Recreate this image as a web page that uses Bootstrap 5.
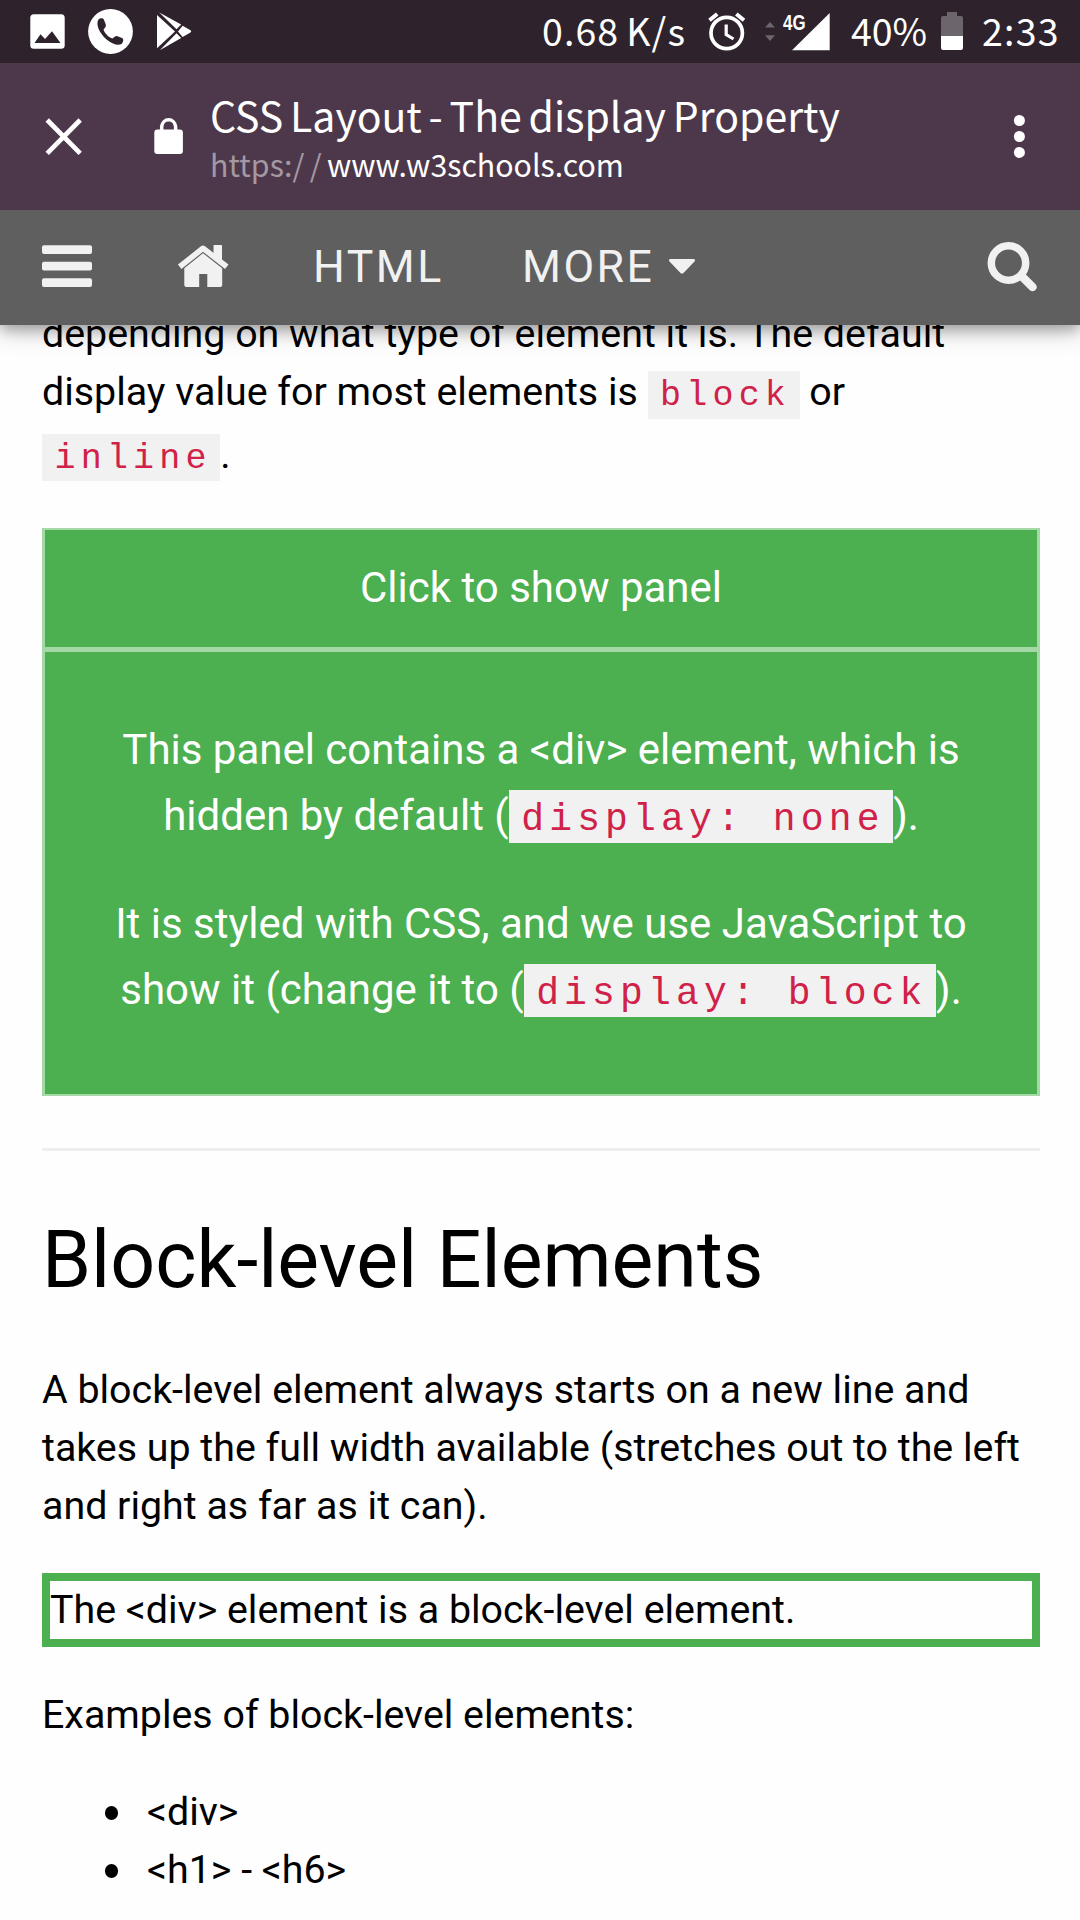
<!DOCTYPE html>
<html lang="en">
<head>
<meta charset="utf-8">
<title>CSS Layout - The display Property</title>
<link href="https://cdn.jsdelivr.net/npm/bootstrap@5.3.0/dist/css/bootstrap.min.css" rel="stylesheet">
<style>
body{font-family:Roboto,"Liberation Sans",sans-serif;font-size:39.37px;line-height:58px;color:#000;background:#fefefe;height:1920px;overflow:hidden}
svg{display:block;flex:none}
.status-bar{height:63px;background:#2e232d;padding:0 19px 0 30px;font:37.5px/59px "Noto Sans CJK SC",sans-serif}
.status-bar .gap-a{margin-left:23px}
.status-bar .gap-b{margin-left:24px}
.speed{width:167px;letter-spacing:1.1px;word-spacing:-2.5px;padding-left:1px}
.pct{width:91px;margin-left:19px;padding-left:1px}
.clock{width:79px;margin-left:19px;letter-spacing:1.2px}
.net-label{font:bold 22px "Liberation Sans",sans-serif}
.app-bar{height:147px;background:#4d384b;font-family:"Noto Sans CJK SC",sans-serif;z-index:3}
.page-info{padding-top:26px;margin-left:25px}
.page-title{font-size:41px;word-spacing:-2.4px;line-height:50px;white-space:nowrap}
.page-url{font-size:30.3px;line-height:51px;white-space:nowrap}
.scheme{color:#a498a3;letter-spacing:.1px}
.slashes{letter-spacing:5.3px}
.site-nav{height:115px;background:#5f5f5f;color:#f1f1f1;font-size:44.6px;letter-spacing:2.5px;line-height:114px;z-index:2;box-shadow:0 5px 13px rgba(0,0,0,.28),0 5px 26px rgba(0,0,0,.2)}
.nav-html{width:209px}
.nav-more{width:134px}
.page-body{padding:0 40px 0 42px}
.intro{margin:-20px 0 44.5px;white-space:nowrap}
.intro-last{margin-top:4.6px}
.kw{font-family:"Liberation Mono",monospace;font-size:35px;letter-spacing:5.2px;color:#d02148;background:#f1f1f1;padding:5px 8.5px 2.5px 12.5px;line-height:1}
.demo-panel{border:2px solid #a4d8a6;border-width:2px 3px;background:#4caf50;color:#fff;font-size:42px;text-align:center;white-space:nowrap}
.demo-head{line-height:115px;padding-bottom:2px;border-bottom:5px solid #a4d8a6}
.demo-text{height:442px;padding-top:65.4px;line-height:66px}
.demo-text p{margin:0 0 41.6px}
.demo-text .kw{font-size:38px;letter-spacing:5.15px;padding:8px 8.5px 2px 12.5px}
.rule-line{height:3px;background:#eee;margin:52px 0 58.7px}
.section-title{font-size:78.8px;line-height:100px;font-weight:400;margin:0 0 51px}
.section-text{margin:0 0 37.8px;white-space:nowrap}
.div-demo{border:8px solid #4caf50;height:74px;line-height:58px}
.examples{margin:39px 0}
.example-list{padding-left:105px;margin:0;list-style:none}
.example-list li{display:flex;align-items:center}
.example-list li::before{content:"";width:13.4px;height:13.4px;border-radius:50%;background:#000;margin:3px 29px 0 -42.4px}
</style>
</head>
<body>
<div class="status-bar d-flex align-items-start text-white">
  <svg width="35" height="63" viewBox="30 0 35 63"><rect x="30.3" y="14.3" width="34.4" height="34.4" rx="3.5" fill="#fff"/><path d="M34.5 43L40.5 34.3 45 39 52 31.3 60.5 43Z" fill="#2e232d"/></svg>
  <svg class="gap-a" width="45" height="63" viewBox="88 0 45 63"><circle cx="110.5" cy="31.5" r="22.4" fill="#fff"/><path d="M98.5 19.5C100 18 103.5 17.5 104 20L105.8 24.5C106.3 27 104.5 28 103.5 29.5 105 34 109 37.5 112.5 38.5 114.5 37 115.5 35.8 117.5 36.2L122 38C124 39 123.5 42 121.5 44 118.5 45.8 112 44.5 106 39 99 32.5 95.5 24 98.5 19.5Z" fill="#2e232d"/></svg>
  <svg class="gap-b" width="35" height="63" viewBox="157 0 35 63" fill="#fff"><path d="M157 15L175 31.4 157 48.3ZM159.3 12.5L181.2 24.5 176.5 29.2ZM182.6 25.7L190.5 30.2Q192 31.3 190.5 32.5L182.6 37 178 31.4ZM176.5 33.3L181.2 38 159.8 50.2Z"/></svg>
  <span class="speed ms-auto">0.68 K/s</span>
  <svg width="38" height="63" viewBox="708 0 38 63" fill="none" stroke="#fff"><circle cx="726.7" cy="33" r="15.7" stroke-width="3.7"/><path d="M726.2 24.5V34.5L733.5 39" stroke-width="3.2"/><path d="M709.5 20.3L717.2 14M744 20.3L736.3 14" stroke-width="4"/></svg>
  <svg class="ms-3" width="14" height="63" viewBox="762 0 14 63" fill="#6d656c"><path d="M765 27.6L770 22 775 27.6ZM765 35.3L770 41 775 35.3Z"/></svg>
  <svg width="55" height="63" viewBox="776 0 55 63"><path d="M792 50.3L829.7 13V50.3Z" fill="#fff"/><text class="net-label" x="783" y="30" textLength="22.5" lengthAdjust="spacingAndGlyphs" fill="#fff">4G</text></svg>
  <span class="pct">40%</span>
  <svg width="22" height="63" viewBox="940 0 22 63"><path d="M946 12H956V16H960Q962 16 962 18V36H940V18Q940 16 942 16H946Z" fill="#6d656c"/><path d="M940 36H962V48Q962 50 960 50H942Q940 50 940 48Z" fill="#fff"/></svg>
  <span class="clock">2:33</span>
</div>

<header class="app-bar d-flex text-white position-relative">
  <svg width="185" height="147" viewBox="0 63 185 147"><path d="M47.2 120L80.2 153.4M80.2 120L47.2 153.4" stroke="#fff" stroke-width="4.7"/><rect x="154.3" y="129.6" width="28.6" height="24.4" rx="3" fill="#fff"/><path d="M161.7 131V126.5A7 7.7 0 0 1 175.6 126.5V131" fill="none" stroke="#fff" stroke-width="3.5"/></svg>
  <div class="page-info">
    <div class="page-title">CSS Layout - The display Property</div>
    <div class="page-url"><span class="scheme">https:<span class="slashes">//</span></span>www.w3schools.com</div>
  </div>
  <svg class="ms-auto" width="90" height="147" viewBox="990 63 90 147" fill="#fff"><circle cx="1019.4" cy="120.5" r="5.5"/><circle cx="1019.4" cy="136.5" r="5.5"/><circle cx="1019.4" cy="152.4" r="5.5"/></svg>
</header>

<nav class="site-nav d-flex position-relative">
  <svg width="313" height="115" viewBox="0 210 313 115" fill="#f1f1f1"><rect x="42" y="245.3" width="50" height="8.8" rx="2"/><rect x="42" y="261.7" width="50" height="8.8" rx="2"/><rect x="42" y="278.2" width="50" height="8.8" rx="2"/><path d="M213.5 245.7Q213.5 245 214.2 245H221.3Q222 245 222 245.7V263L213.5 256.5Z"/><path d="M179.7 266.7L203 248.3 226.8 266.7" fill="none" stroke="#f1f1f1" stroke-width="5.6" stroke-linejoin="round"/><path d="M184.3 268.3L203 253.2 222.2 268.3V285Q222.2 287 220.2 287H207.3V274H199.2V287H186.3Q184.3 287 184.3 285Z"/></svg>
  <span class="nav-html">HTML</span>
  <span class="nav-more">MORE</span>
  <svg width="40" height="115" viewBox="656 210 40 115" fill="#f1f1f1"><path d="M670.5 259H693.5Q696 259.5 694.5 261.5L683.5 273Q682 274.2 680.5 273L669.5 261.5Q668 259.5 670.5 259Z"/></svg>
  <svg class="ms-auto" width="100" height="115" viewBox="980 210 100 115" fill="none" stroke="#f1f1f1"><circle cx="1008.5" cy="263" r="17.2" stroke-width="7.5"/><path d="M1021.5 276L1032.5 287" stroke-width="8.2" stroke-linecap="round"/></svg>
</nav>

<main class="page-body">
  <p class="intro">depending on what type of element it is. The default<br>display value for most elements is <code class="kw">block</code> or<span class="intro-last d-block"><code class="kw">inline</code>.</span></p>
  <section class="demo-panel">
    <div class="demo-head">Click to show panel</div>
    <div class="demo-text">
      <p>This panel contains a &lt;div&gt; element, which is<br>hidden by default (<code class="kw">display: none</code>).</p>
      <p>It is styled with CSS, and we use JavaScript to<br>show it (change it to (<code class="kw">display: block</code>).</p>
    </div>
  </section>
  <div class="rule-line"></div>
  <h2 class="section-title">Block-level Elements</h2>
  <p class="section-text">A block-level element always starts on a new line and<br>takes up the full width available (stretches out to the left<br>and right as far as it can).</p>
  <div class="div-demo">The &lt;div&gt; element is a block-level element.</div>
  <p class="examples">Examples of block-level elements:</p>
  <ul class="example-list">
    <li>&lt;div&gt;</li>
    <li>&lt;h1&gt; - &lt;h6&gt;</li>
  </ul>
</main>
<script src="https://cdn.jsdelivr.net/npm/bootstrap@5.3.0/dist/js/bootstrap.bundle.min.js"></script>
</body>
</html>
